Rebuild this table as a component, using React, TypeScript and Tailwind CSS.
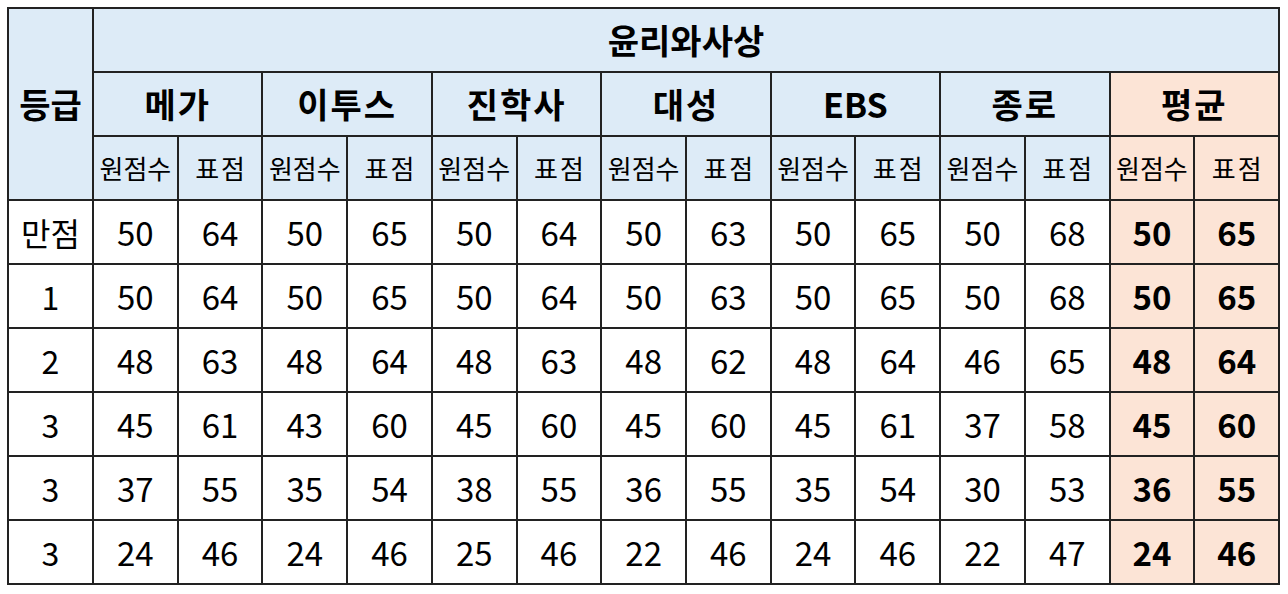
import React from 'react';

const publishers = ['메가', '이투스', '진학사', '대성', 'EBS', '종로'];

const rows: { grade: string; scores: number[] }[] = [
  { grade: '만점', scores: [50, 64, 50, 65, 50, 64, 50, 63, 50, 65, 50, 68, 50, 65] },
  { grade: '1', scores: [50, 64, 50, 65, 50, 64, 50, 63, 50, 65, 50, 68, 50, 65] },
  { grade: '2', scores: [48, 63, 48, 64, 48, 63, 48, 62, 48, 64, 46, 65, 48, 64] },
  { grade: '3', scores: [45, 61, 43, 60, 45, 60, 45, 60, 45, 61, 37, 58, 45, 60] },
  { grade: '3', scores: [37, 55, 35, 54, 38, 55, 36, 55, 35, 54, 30, 53, 36, 55] },
  { grade: '3', scores: [24, 46, 24, 46, 25, 46, 22, 46, 24, 46, 22, 47, 24, 46] },
];

const font = { fontFamily: "'Noto Sans CJK KR', 'Noto Sans', sans-serif" };

export default function App() {
  return (
    <div className="w-[1288px] h-[594px] bg-white pl-[7px] pt-[7px]" style={font}>
      <div className="w-[1273px] grid grid-cols-[83px_repeat(14,1fr)] grid-rows-[repeat(9,62px)] gap-[2px] p-[2px] bg-[#222] text-black">
        {/* 등급 */}
        <div className="row-span-3 bg-[#DDEBF7] flex items-center justify-center text-[34px] font-bold leading-none">
          등급
        </div>
        {/* subject */}
        <div className="col-span-14 bg-[#DDEBF7] flex items-center justify-center text-[34px] font-bold leading-none">
          윤리와사상
        </div>
        {/* publishers */}
        {publishers.map((p) => (
          <div
            key={p}
            className={`col-span-2 bg-[#DDEBF7] flex items-center justify-center text-[34px] font-bold leading-none ${p === 'EBS' ? '' : 'tracking-[2px]'}`}
          >
            {p}
          </div>
        ))}
        <div className="col-span-2 bg-[#FCE4D6] flex items-center justify-center text-[34px] font-bold leading-none tracking-[2px]">
          평균
        </div>
        {/* sub headers */}
        {Array.from({ length: 7 }).map((_, i) => (
          <React.Fragment key={i}>
            <div className={`${i === 6 ? 'bg-[#FCE4D6]' : 'bg-[#DDEBF7]'} flex items-center justify-center text-[26px] leading-none whitespace-nowrap`}>
              원점수
            </div>
            <div className={`${i === 6 ? 'bg-[#FCE4D6]' : 'bg-[#DDEBF7]'} flex items-center justify-center text-[26px] leading-none whitespace-nowrap tracking-[2px] pl-[2px]`}>
              표점
            </div>
          </React.Fragment>
        ))}
        {/* data */}
        {rows.map((r, ri) => (
          <React.Fragment key={ri}>
            <div className="bg-white flex items-center justify-center text-[32px] leading-none">{r.grade}</div>
            {r.scores.map((s, si) => (
              <div
                key={si}
                className={
                  si >= 12
                    ? 'bg-[#FCE4D6] flex items-center justify-center text-[33px] font-bold leading-none'
                    : 'bg-white flex items-center justify-center text-[33px] leading-none'
                }
              >
                {s}
              </div>
            ))}
          </React.Fragment>
        ))}
      </div>
    </div>
  );
}
